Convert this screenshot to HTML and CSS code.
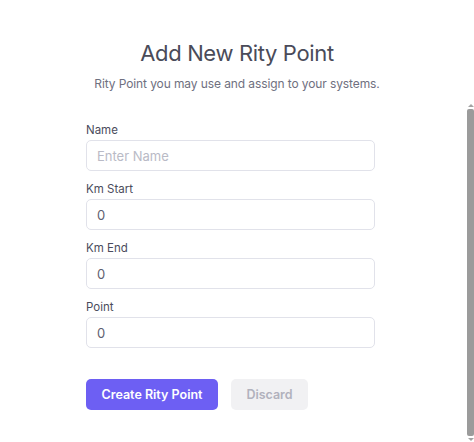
FILE: index.html
```html
<!DOCTYPE html>
<html lang="en">
<head>
<meta charset="utf-8">
<title>Add New Rity Point</title>
<link rel="stylesheet" href="styles.css">
</head>
<body>
<div class="modal">
  <div class="head">
    <h1 class="title">Add New Rity Point</h1>
    <p class="subtitle">Rity Point you may use and assign to your systems.</p>
  </div>
  <div class="scroll">
    <form class="form">
      <div class="field">
        <label class="label">Name</label>
        <input class="input" type="text" placeholder="Enter Name">
      </div>
      <div class="field">
        <label class="label">Km Start</label>
        <input class="input" type="text" value="0">
      </div>
      <div class="field">
        <label class="label">Km End</label>
        <input class="input" type="text" value="0">
      </div>
      <div class="field">
        <label class="label">Point</label>
        <input class="input" type="text" value="0">
      </div>
      <div class="actions">
        <button type="button" class="btn btn-primary">Create Rity Point</button>
        <button type="button" class="btn btn-light">Discard</button>
      </div>
    </form>
    <div class="scrollbar" aria-hidden="true">
      <span class="sb-arrow sb-up"></span>
      <span class="sb-thumb"></span>
      <span class="sb-arrow sb-down"></span>
    </div>
  </div>
</div>
</body>
</html>
```
FILE: styles.css
```css
* { box-sizing: border-box; }
html, body { margin: 0; padding: 0; background: #ffffff; }
body {
  font-family: Inter, "Noto Sans", sans-serif;
  color: #3f4254;
  overflow: hidden;
}
.modal {
  width: 474px;
  height: 442px;
  display: flex;
  flex-direction: column;
}
.head {
  height: 100px;
  padding-top: 38px;
  text-align: center;
}
.title {
  margin: 0;
  font-size: 22px;
  font-weight: 400;
  line-height: 30px;
  letter-spacing: -0.35px;
  color: #4a4b59;
}
.subtitle {
  margin: 8px 0 0 0;
  font-size: 12px;
  line-height: 16px;
  letter-spacing: -0.1px;
  color: #6f7080;
}
.scroll {
  position: relative;
  flex: 1;
  overflow: hidden;
}
.scrollbar {
  position: absolute;
  top: 0;
  right: 0;
  bottom: 0;
  width: 7px;
  display: flex;
  flex-direction: column;
  align-items: center;
  gap: 2px;
  padding: 4px 0 1px;
}
.sb-arrow {
  width: 0;
  height: 0;
  border-left: 3px solid transparent;
  border-right: 3px solid transparent;
}
.sb-up { border-bottom: 3px solid #a3a3a3; }
.sb-down { border-top: 3px solid #a3a3a3; }
.sb-thumb {
  flex: 1;
  width: 7px;
  background: #9b9b9b;
  border-radius: 2px;
}
.form {
  width: 289px;
  margin: 23px 0 0 86px;
}
.field { margin-bottom: 11px; }
.label {
  display: block;
  font-size: 11.5px;
  line-height: 14px;
  margin-bottom: 3px;
  color: #4b4c5c;
}
.input {
  display: block;
  width: 100%;
  height: 31px;
  border: 1px solid #e1e2ea;
  border-radius: 5px;
  padding: 0 10px;
  font-family: inherit;
  font-size: 13px;
  color: #5e6070;
  background: #ffffff;
  outline: none;
}
.input::placeholder { color: #b9bac6; }
.actions {
  display: flex;
  gap: 13px;
  margin-top: 31px;
}
.btn {
  height: 31px;
  border: none;
  border-radius: 5px;
  font-family: inherit;
  font-size: 12.5px;
  font-weight: 600;
  padding: 0 15px;
}
.btn-primary { background: #6d5ff3; color: #ffffff; width: 132px; }
.btn-light { background: #f1f1f3; color: #b1b2bd; width: 77px; }
```
